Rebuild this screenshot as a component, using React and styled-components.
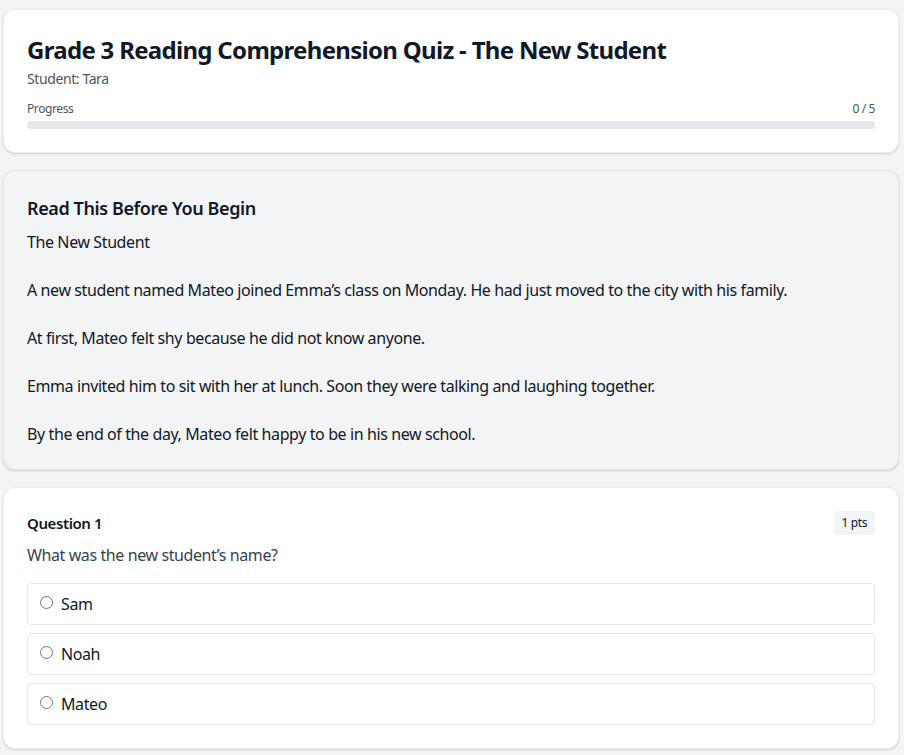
import React from "react";
import styled, { createGlobalStyle } from "styled-components";

const GlobalStyle = createGlobalStyle`
  body {
    margin: 0;
    background: #f3f4f6;
    font-family: "Noto Sans", "Open Sans", sans-serif;
    letter-spacing: -0.025em;
    color: #111827;
  }
  * { box-sizing: border-box; }
`;

const Page = styled.div`
  display: flex;
  flex-direction: column;
  gap: 17px;
  padding: 9px 5px 9px 3px;
`;

const Card = styled.section`
  background: ${(p) => (p.muted ? "#f3f4f6" : "#ffffff")};
  border: 1px solid ${(p) => (p.muted ? "#e5e7eb" : "#eceef1")};
  border-radius: 12px;
  box-shadow: 0 1px 3px rgba(0, 0, 0, 0.1), 0 1px 2px rgba(0, 0, 0, 0.06);
  padding: 23px;
`;

const Title = styled.h1`
  margin: 0;
  font-size: 24px;
  line-height: 34px;
  font-weight: 700;
  letter-spacing: -0.029em;
  color: #111827;
`;

const Sub = styled.div`
  margin-top: 2px;
  font-size: 14px;
  line-height: 20px;
  color: #4b5563;
`;

const ProgressRow = styled.div`
  display: flex;
  justify-content: space-between;
  margin-top: 12px;
  font-size: 12px;
  line-height: 16px;
  color: #4b5563;
`;

const Track = styled.div`
  margin-top: 4px;
  height: 8px;
  border-radius: 999px;
  background: #e5e7eb;
  overflow: hidden;
`;

const Fill = styled.div`
  height: 100%;
  background: #3b82f6;
`;

const Heading = styled.h2`
  margin: 0 0 8px;
  font-size: 18px;
  line-height: 28px;
  font-weight: 600;
  color: #111827;
`;

const Passage = styled.div`
  white-space: pre-wrap;
  font-size: 16px;
  line-height: 24px;
  color: #111827;
`;

const QHead = styled.div`
  display: flex;
  justify-content: space-between;
  align-items: center;
`;

const QLabel = styled.h3`
  margin: 0;
  font-size: 15px;
  line-height: 24px;
  font-weight: 600;
  color: #111827;
`;

const Pts = styled.span`
  background: #f3f4f6;
  border-radius: 4px;
  padding: 4px 8px;
  font-size: 12px;
  line-height: 16px;
  color: #111827;
`;

const QText = styled.p`
  margin: 8px 0 16px;
  font-size: 16px;
  line-height: 24px;
  color: #374151;
`;

const Options = styled.div`
  display: flex;
  flex-direction: column;
  gap: 8px;
`;

const Option = styled.label`
  display: flex;
  align-items: center;
  gap: 8px;
  height: 42px;
  padding: 0 12px;
  border: 1px solid #e5e7eb;
  border-radius: 4px;
  font-size: 16px;
  color: #111827;
  cursor: pointer;
`;

const Radio = styled.input`
  margin: 0 0 3px;
  width: 13px;
  height: 13px;
`;

const passage = `The New Student

A new student named Mateo joined Emma\u2019s class on Monday. He had just moved to the city with his family.

At first, Mateo felt shy because he did not know anyone.

Emma invited him to sit with her at lunch. Soon they were talking and laughing together.

By the end of the day, Mateo felt happy to be in his new school.`;

const answers = ["Sam", "Noah", "Mateo"];

export default function App() {
  const done = 0;
  const total = 5;
  return (
    <>
      <GlobalStyle />
      <Page>
        <Card>
          <Title>Grade 3 Reading Comprehension Quiz - The New Student</Title>
          <Sub>Student: Tara</Sub>
          <ProgressRow>
            <span>Progress</span>
            <span>
              {done} / {total}
            </span>
          </ProgressRow>
          <Track>
            <Fill style={{ width: `${(done / total) * 100}%` }} />
          </Track>
        </Card>
        <Card muted>
          <Heading>Read This Before You Begin</Heading>
          <Passage>{passage}</Passage>
        </Card>
        <Card>
          <QHead>
            <QLabel>Question 1</QLabel>
            <Pts>1 pts</Pts>
          </QHead>
          <QText>{"What was the new student\u2019s name?"}</QText>
          <Options>
            {answers.map((a) => (
              <Option key={a}>
                <Radio type="radio" name="q1" />
                {a}
              </Option>
            ))}
          </Options>
        </Card>
      </Page>
    </>
  );
}
